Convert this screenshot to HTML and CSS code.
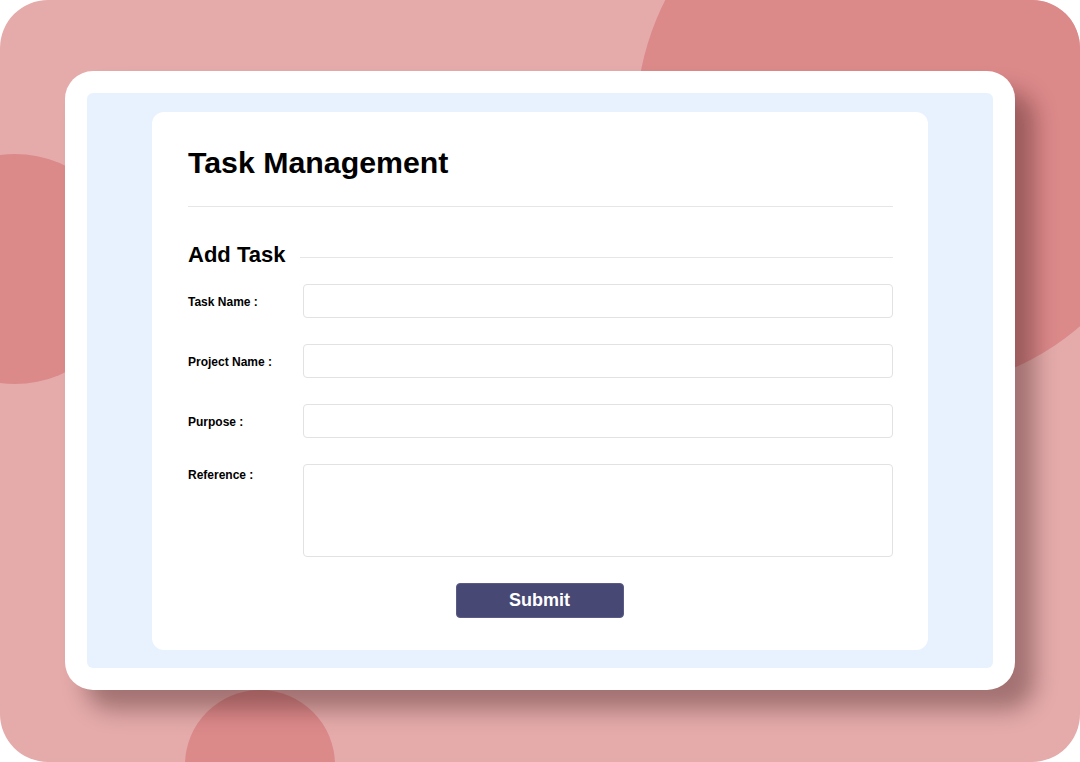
FILE: index.html
```html
<!DOCTYPE html>
<html lang="en">
<head>
<meta charset="utf-8">
<title>Task Management</title>
<link rel="stylesheet" href="styles.css">
</head>
<body>
<div class="stage">
  <div class="blob blob-tr"></div>
  <div class="blob blob-l"></div>
  <div class="blob blob-b"></div>
  <div class="card">
    <div class="tint">
      <div class="panel">
        <h1 class="title">Task Management</h1>
        <hr class="sep">
        <div class="section-head">
          <h2 class="section-title">Add Task</h2>
          <span class="section-line"></span>
        </div>
        <form class="form">
          <div class="row">
            <label class="label" for="task">Task Name :</label>
            <input class="field" id="task" type="text">
          </div>
          <div class="row">
            <label class="label" for="project">Project Name :</label>
            <input class="field" id="project" type="text">
          </div>
          <div class="row">
            <label class="label" for="purpose">Purpose :</label>
            <input class="field" id="purpose" type="text">
          </div>
          <div class="row row-top">
            <label class="label label-top" for="ref">Reference :</label>
            <textarea class="field area" id="ref"></textarea>
          </div>
          <div class="actions">
            <button class="submit" type="button">Submit</button>
          </div>
        </form>
      </div>
    </div>
  </div>
</div>
</body>
</html>
```
FILE: styles.css
```css
* { box-sizing: border-box; }
html, body { margin: 0; padding: 0; background: #ffffff; }
body { font-family: "Liberation Sans", Arial, sans-serif; }

.stage {
  position: relative;
  width: 1080px;
  height: 762px;
  background: #e5abab;
  border-radius: 48px;
  overflow: hidden;
  padding: 71px 65px 72px 65px;
}

.blob {
  position: absolute;
  background: #dc898a;
  border-radius: 50%;
}
.blob-tr { left: 636px; top: -147px; width: 538px; height: 538px; }
.blob-l { left: -100px; top: 154px; width: 230px; height: 230px; }
.blob-b { left: 185px; top: 690px; width: 150px; height: 150px; }

.card {
  position: relative;
  height: 619px;
  background: #ffffff;
  border-radius: 28px;
  padding: 22px;
  box-shadow: 20px 20px 22px rgba(40, 10, 10, 0.35);
}

.tint {
  height: 100%;
  background: #e8f2fe;
  border-radius: 6px;
  padding: 19px 65px 18px 65px;
}

.panel {
  height: 100%;
  background: #ffffff;
  border-radius: 12px;
  padding: 34px 35px 32px 36px;
}

.title {
  margin: 0;
  font-size: 30.3px;
  line-height: 34px;
  font-weight: 700;
  color: #000;
}

.sep {
  margin: 26px 0 0 0;
  border: 0;
  height: 1px;
  background: #e6e6e6;
}

.section-head {
  display: flex;
  align-items: flex-start;
  gap: 15px;
  margin-top: 35px;
}
.section-title {
  margin: 0;
  font-size: 22px;
  line-height: 26px;
  font-weight: 700;
  color: #000;
  white-space: nowrap;
}
.section-line {
  flex: 1;
  height: 1px;
  margin-top: 15px;
  background: #e6e6e6;
}

.form {
  margin: 16px 0 0 0;
  display: flex;
  flex-direction: column;
  gap: 26px;
}

.row {
  display: flex;
  align-items: center;
}
.row-top { align-items: flex-start; }

.label {
  width: 115px;
  flex: none;
  font-size: 12px;
  line-height: 14px;
  font-weight: 700;
  color: #000;
  padding-top: 2px;
}
.label-top { padding-top: 4px; }

.field {
  flex: 1;
  height: 34px;
  border: 1px solid #e2e2e2;
  border-radius: 4px;
  background: #fff;
  font-family: inherit;
  font-size: 13px;
  padding: 6px 10px;
  outline: none;
}
.area {
  height: 93px;
  resize: none;
}

.actions {
  display: flex;
  justify-content: center;
  padding-right: 2px;
}

.submit {
  width: 168px;
  height: 35px;
  background: #474874;
  color: #ffffff;
  border: 1px solid #5a5b85;
  border-radius: 4px;
  font-family: inherit;
  font-size: 18px;
  font-weight: 700;
  cursor: pointer;
}
```
